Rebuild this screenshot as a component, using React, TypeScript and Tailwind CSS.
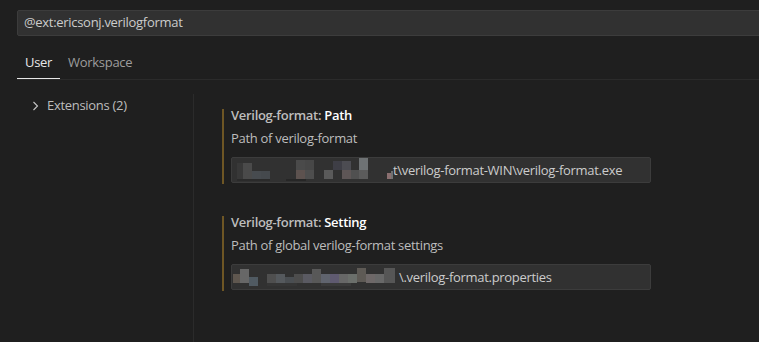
import React from "react";

const font = { fontFamily: '"Open Sans", "Noto Sans", sans-serif', letterSpacing: "-0.3px" };

type R = [number, number, number, number, string];

function Mosaic({ rects, width }: { rects: R[]; width: number }) {
  return (
    <svg width={width} height="24" className="shrink-0">
      {rects.map(([x, y, w, h, c], i) => (
        <rect key={i} x={x} y={y} width={w} height={h} fill={c} />
      ))}
    </svg>
  );
}

const m1: R[] = [
  [5, 5, 6, 16, "#383838"],
  [11, 5, 9, 16, "#4a4a4a"],
  [20, 13, 9, 8, "#474b4f"],
  [29, 13, 9, 8, "#45494d"],
  [64, 2, 9, 10, "#4a4a4a"],
  [73, 2, 9, 10, "#474747"],
  [64, 12, 9, 9, "#5d524f"],
  [73, 12, 9, 9, "#4e4e4e"],
  [92, 12, 9, 9, "#5a5a5a"],
  [101, 3, 9, 9, "#3e3e46"],
  [110, 3, 9, 9, "#4c4c52"],
  [110, 12, 9, 9, "#5e5656"],
  [119, 12, 8, 9, "#505050"],
  [127, 0, 9, 12, "#6e7274"],
  [127, 12, 9, 9, "#5b5b5b"],
  [5, 21, 33, 2, "#2a2a2a"],
  [54, 21, 20, 2, "#262626"],
  [155, 15, 4, 6, "#8a6f70"],
  [159, 13, 2, 8, "#707070"],
];

const m2: R[] = [
  [1, 9, 7, 9, "#5f574f"],
  [8, 4, 9, 14, "#676767"],
  [17, 12, 9, 9, "#505a62"],
  [35, 9, 9, 9, "#4f4f4f"],
  [44, 9, 9, 9, "#55595d"],
  [53, 12, 9, 9, "#4a4e52"],
  [62, 9, 9, 9, "#4d4d4d"],
  [71, 9, 9, 9, "#5a5a62"],
  [80, 4, 9, 14, "#585858"],
  [89, 9, 9, 9, "#60646e"],
  [98, 9, 9, 9, "#5f5a70"],
  [107, 9, 9, 9, "#676767"],
  [116, 9, 9, 9, "#6b6f6b"],
  [125, 3, 9, 14, "#5e5a55"],
  [134, 9, 9, 9, "#6e6868"],
  [143, 9, 9, 9, "#686868"],
  [152, 3, 11, 15, "#565656"],
  [35, 18, 30, 3, "#353535"],
  [89, 18, 30, 3, "#3a3a3a"],
];

function Setting({
  name,
  desc,
  mosaic,
  value,
}: {
  name: string;
  desc: string;
  mosaic: React.ReactNode;
  value: string;
}) {
  return (
    <div className="flex">
      <div className="w-[2px] bg-[#6e5624] mt-[3px] mb-[-1px]" />
      <div className="pl-[7px]">
        <div className="h-[18px] leading-[18px] text-[13px] font-semibold text-[#bdbdbd]">
          Verilog-format: <span className="text-[#ffffff]">{name}</span>
        </div>
        <div className="mt-[5px] h-[18px] leading-[18px] text-[13px] text-[#bdbdbd]">
          {desc}
        </div>
        <div className="mt-[10px] w-[420px] h-[26px] rounded-[2px] border border-[#3c3c3c] bg-[#313131] flex items-center text-[13px] text-[#cccccc] overflow-hidden">
          {mosaic}
          <span className="leading-[24px]">{value}</span>
        </div>
      </div>
    </div>
  );
}

export default function App() {
  return (
    <div className="w-[759px] h-[342px] bg-[#1f1f1f] overflow-hidden" style={font}>
      <div className="pt-[10px] pl-[17px]">
        <div className="w-[760px] h-[26px] rounded-[2px] border border-[#3c3c3c] bg-[#313131] pl-[6px] flex items-center text-[13px] text-[#cccccc]">
          @ext:ericsonj.verilogformat
        </div>
      </div>
      <div className="ml-[17px] mt-[11px] flex border-b border-[#2b2b2b] text-[13px]">
        <div className="px-2 h-[32px] leading-[31px] text-[#e7e7e7] border-b border-[#e7e7e7]">
          User
        </div>
        <div className="px-2 h-[32px] leading-[31px] text-[#9d9d9d]">Workspace</div>
      </div>
      <div className="flex">
        <div className="w-[193px] shrink-0 pt-[17px] pl-[32px]">
          <div className="flex items-center h-[18px] text-[13px] text-[#bdbdbd]">
            <svg width="8" height="10" viewBox="0 0 8 10" className="mr-[7px]">
              <path d="M1.5 1 L5.5 5 L1.5 9" stroke="#c5c5c5" strokeWidth="1.1" fill="none" />
            </svg>
            Extensions (2)
          </div>
        </div>
        <div className="w-px bg-[#2b2b2b] mt-[14px] h-[270px]" />
        <div className="pl-[28px] pt-[26px] flex flex-col gap-[30px]">
          <Setting
            name="Path"
            desc="Path of verilog-format"
            mosaic={<Mosaic rects={m1} width={161} />}
            value="t\verilog-format-WIN\verilog-format.exe"
          />
          <Setting
            name="Setting"
            desc="Path of global verilog-format settings"
            mosaic={<Mosaic rects={m2} width={167} />}
            value="\.verilog-format.properties"
          />
        </div>
      </div>
    </div>
  );
}
